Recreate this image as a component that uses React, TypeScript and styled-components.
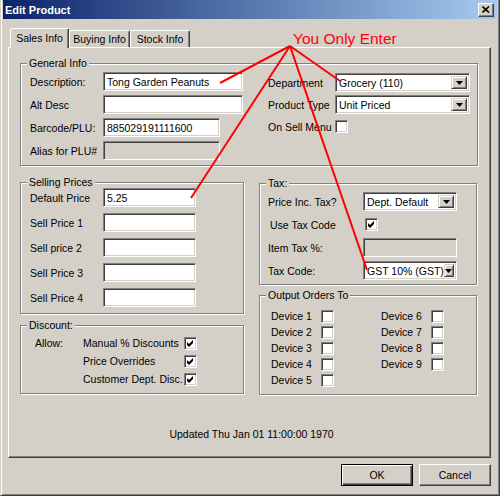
import React from 'react'
import styled, { createGlobalStyle } from 'styled-components'

const GlobalStyle = createGlobalStyle`
  html, body {
    margin: 0;
    padding: 0;
    background: #d4d0c8;
  }
  body {
    font-family: 'Liberation Sans', Arial, sans-serif;
    font-size: 10.5px;
    color: #000;
  }
  * {
    box-sizing: border-box;
  }
`

const Window = styled.div`
  position: relative;
  width: 500px;
  height: 496px;
  background: #d4d0c8;
  border-style: solid;
  border-width: 0 1px 1px 1px;
  border-color: #d4d0c8 #404040 #404040 #d4d0c8;
  box-shadow: inset 1px 0 0 #fff, inset -1px -1px 0 #808080;
  padding: 0 2px 2px 2px;
  display: flex;
  flex-direction: column;
`

const TitleBar = styled.div`
  height: 19px;
  display: flex;
  align-items: center;
  justify-content: space-between;
  padding: 0 3px 0 2px;
  background: linear-gradient(to right, #0a246a, #a6caf0);
`

const TitleText = styled.span`
  color: #fff;
  font-weight: bold;
  font-size: 11px;
`

const CloseButton = styled.div`
  width: 16px;
  height: 14px;
  background: #d4d0c8;
  border: 1px solid;
  border-color: #fff #404040 #404040 #fff;
  box-shadow: inset -1px -1px 0 #808080;
  display: flex;
  align-items: center;
  justify-content: center;
`

const Body = styled.div`
  padding: 9px 6px 0 5px;
  display: flex;
  flex-direction: column;
`

const TabStrip = styled.div`
  display: flex;
  align-items: flex-end;
  height: 19px;
  padding-left: 2px;
`

const Tab = styled.div<{ $active?: boolean; $width: number }>`
  position: relative;
  z-index: ${(p) => (p.$active ? 2 : 1)};
  width: ${(p) => p.$width}px;
  height: ${(p) => (p.$active ? 20 : 17)}px;
  margin-bottom: ${(p) => (p.$active ? -1 : 0)}px;
  background: #d4d0c8;
  border-style: solid;
  border-width: 1px 1px 0 1px;
  border-color: #fff #404040 #fff #fff;
  border-top-left-radius: 2px;
  border-top-right-radius: 2px;
  box-shadow: inset -1px 0 0 #808080;
  display: flex;
  align-items: center;
  justify-content: center;
  padding-bottom: ${(p) => (p.$active ? 2 : 0)}px;
`

const TabPanel = styled.div`
  width: 483px;
  height: 411px;
  border: 1px solid;
  border-color: #fff #404040 #404040 #fff;
  box-shadow: inset -1px -1px 0 #808080;
  padding: 15px 12px 0 11px;
  display: flex;
  flex-direction: column;
`

const GroupBox = styled.div<{ $w: number; $h: number }>`
  position: relative;
  width: ${(p) => p.$w}px;
  height: ${(p) => p.$h}px;
  border: 1px solid #808080;
  box-shadow: inset 1px 1px 0 #fff, 1px 1px 0 #fff;
`

const Legend = styled.span`
  position: absolute;
  top: -7px;
  left: 6px;
  padding: 0 2px;
  line-height: 13px;
  background: #d4d0c8;
`

const Group = ({
  legend,
  w,
  h,
  children,
}: {
  legend: string
  w: number
  h: number
  children: React.ReactNode
}) => (
  <GroupBox $w={w} $h={h}>
    <Legend>{legend}</Legend>
    {children}
  </GroupBox>
)

const GeneralBody = styled.div`
  display: flex;
  gap: 25px;
  padding: 8px 0 0 9px;
`

const FieldStack = styled.div<{ $gap: number; $pad?: string }>`
  display: flex;
  flex-direction: column;
  gap: ${(p) => p.$gap}px;
  padding: ${(p) => p.$pad || '0'};
`

const Row = styled.div`
  display: flex;
  align-items: center;
  height: 19px;
`

const Label = styled.span<{ $w: number; $indent?: number }>`
  width: ${(p) => p.$w}px;
  padding-left: ${(p) => p.$indent || 0}px;
  white-space: nowrap;
`

const TextBox = styled.div<{ $w: number; $disabled?: boolean; $h?: number }>`
  width: ${(p) => p.$w}px;
  height: ${(p) => p.$h || 19}px;
  background: ${(p) => (p.$disabled ? '#d4d0c8' : '#fff')};
  border: 1px solid;
  border-color: #808080 #fff #fff #808080;
  box-shadow: inset 1px 1px 0 #404040, inset -1px -1px 0 #d4d0c8;
  padding: 0 3px;
  display: flex;
  align-items: center;
  white-space: nowrap;
  overflow: hidden;
`

const SelectBox = styled(TextBox)`
  justify-content: space-between;
  padding: 2px 2px 2px 3px;
`

const DropButton = styled.div`
  width: 16px;
  height: 100%;
  background: #d4d0c8;
  border: 1px solid;
  border-color: #d4d0c8 #404040 #404040 #d4d0c8;
  box-shadow: inset 1px 1px 0 #fff, inset -1px -1px 0 #808080;
  display: flex;
  align-items: center;
  justify-content: center;
`

const Select = ({ w, value }: { w: number; value: string }) => (
  <SelectBox $w={w}>
    <span>{value}</span>
    <DropButton>
      <svg width="7" height="4" viewBox="0 0 7 4">
        <polygon points="0,0 7,0 3.5,4" fill="#000" />
      </svg>
    </DropButton>
  </SelectBox>
)

const CheckBoxBox = styled.div<{ $ml?: number }>`
  width: 13px;
  height: 13px;
  margin-left: ${(p) => p.$ml || 0}px;
  background: #fff;
  border: 1px solid;
  border-color: #808080 #fff #fff #808080;
  box-shadow: inset 1px 1px 0 #404040, inset -1px -1px 0 #d4d0c8;
  display: flex;
  align-items: center;
  justify-content: center;
  flex-shrink: 0;
`

const CheckBox = ({ checked, ml }: { checked?: boolean; ml?: number }) => (
  <CheckBoxBox $ml={ml}>
    {checked && (
      <svg width="7" height="7" viewBox="0 0 7 7">
        <polygon points="0,2 2,4 6,0 6,3 2,7 0,5" fill="#000" />
      </svg>
    )}
  </CheckBoxBox>
)

const Columns = styled.div`
  display: flex;
  gap: 15px;
  margin-top: 16px;
`

const Column = styled.div<{ $gap: number; $top?: number }>`
  display: flex;
  flex-direction: column;
  gap: ${(p) => p.$gap}px;
  margin-top: ${(p) => p.$top || 0}px;
`

const DiscountGrid = styled.div`
  display: grid;
  grid-template-columns: 48px 101px 13px;
  grid-auto-rows: 18px;
  align-items: center;
  padding: 8px 0 0 14px;
`

const DeviceGrid = styled.div`
  display: grid;
  grid-template-columns: 110px 110px;
  grid-template-rows: repeat(5, 16px);
  grid-auto-flow: column;
  padding: 12px 0 0 11px;
`

const Device = styled.div`
  display: flex;
  align-items: center;
`

const Updated = styled.div`
  margin-top: 33px;
  padding-left: 5px;
  text-align: center;
  line-height: 13px;
`

const ButtonRow = styled.div`
  display: flex;
  justify-content: flex-end;
  gap: 6px;
  margin-top: 6px;
  padding-right: 0;
`

const Button = styled.div<{ $default?: boolean }>`
  width: 72px;
  height: 22px;
  background: #d4d0c8;
  display: flex;
  align-items: center;
  justify-content: center;
  border: 1px solid;
  border-color: ${(p) => (p.$default ? '#000' : '#fff #404040 #404040 #fff')};
  box-shadow: ${(p) =>
    p.$default
      ? 'inset 1px 1px 0 #fff, inset -1px -1px 0 #404040, inset -2px -2px 0 #808080'
      : 'inset -1px -1px 0 #808080'};
`

const Annotation = styled.svg`
  position: absolute;
  left: -1px;
  top: 0;
  pointer-events: none;
`

const devices = [1, 2, 3, 4, 5, 6, 7, 8, 9]
const sellRows = ['Sell Price 1', 'Sell price 2', 'Sell Price 3', 'Sell Price 4']

const App = () => {
  return (
    <Window>
      <GlobalStyle />
      <TitleBar>
        <TitleText>Edit Product</TitleText>
        <CloseButton>
          <svg width="8" height="7" viewBox="0 0 8 7">
            <path d="M0.5 0.5 L7 6.5 M7 0.5 L0.5 6.5" stroke="#000" strokeWidth="1.6" />
          </svg>
        </CloseButton>
      </TitleBar>
      <Body>
        <TabStrip>
          <Tab $active $width={59}>Sales Info</Tab>
          <Tab $width={61}>Buying Info</Tab>
          <Tab $width={60}>Stock Info</Tab>
        </TabStrip>
        <TabPanel>
          <Group legend="General Info" w={458} h={103}>
            <GeneralBody>
              <FieldStack $gap={4}>
                <Row>
                  <Label $w={73}>Description:</Label>
                  <TextBox $w={140}>Tong Garden Peanuts</TextBox>
                </Row>
                <Row>
                  <Label $w={73}>Alt Desc</Label>
                  <TextBox $w={140} />
                </Row>
                <Row>
                  <Label $w={73}>Barcode/PLU:</Label>
                  <TextBox $w={117}>885029191111600</TextBox>
                </Row>
                <Row>
                  <Label $w={73}>Alias for PLU#</Label>
                  <TextBox $w={117} $disabled />
                </Row>
              </FieldStack>
              <FieldStack $gap={3} $pad="1px 0 0 0">
                <Row>
                  <Label $w={67}>Department</Label>
                  <Select w={135} value="Grocery (110)" />
                </Row>
                <Row>
                  <Label $w={67}>Product Type</Label>
                  <Select w={135} value="Unit Priced" />
                </Row>
                <Row>
                  <Label $w={67}>On Sell Menu</Label>
                  <CheckBox />
                </Row>
              </FieldStack>
            </GeneralBody>
          </Group>
          <Columns>
            <Column $gap={11}>
              <Group legend="Selling Prices" w={224} h={132}>
                <FieldStack $gap={6} $pad="5px 0 0 9px">
                  <Row>
                    <Label $w={73}>Default Price</Label>
                    <TextBox $w={93}>5.25</TextBox>
                  </Row>
                  {sellRows.map((r) => (
                    <Row key={r}>
                      <Label $w={73}>{r}</Label>
                      <TextBox $w={93} />
                    </Row>
                  ))}
                </FieldStack>
              </Group>
              <Group legend="Discount:" w={224} h={69}>
                <DiscountGrid>
                  <span>Allow:</span>
                  <span>Manual % Discounts</span>
                  <CheckBox checked />
                  <span />
                  <span>Price Overrides</span>
                  <CheckBox checked />
                  <span />
                  <span>Customer Dept. Disc.</span>
                  <CheckBox checked />
                </DiscountGrid>
              </Group>
            </Column>
            <Column $gap={10} $top={1}>
              <Group legend="Tax:" w={218} h={102}>
                <FieldStack $gap={4} $pad="8px 0 0 8px">
                  <Row>
                    <Label $w={95}>Price Inc. Tax?</Label>
                    <Select w={94} value="Dept. Default" />
                  </Row>
                  <Row>
                    <Label $w={95} $indent={2}>Use Tax Code</Label>
                    <CheckBox checked ml={2} />
                  </Row>
                  <Row>
                    <Label $w={95}>Item Tax %:</Label>
                    <TextBox $w={94} $disabled />
                  </Row>
                  <Row>
                    <Label $w={95}>Tax Code:</Label>
                    <Select w={94} value="GST 10% (GST)" />
                  </Row>
                </FieldStack>
              </Group>
              <Group legend="Output Orders To" w={218} h={100}>
                <DeviceGrid>
                  {devices.map((d) => (
                    <Device key={d}>
                      <Label $w={50}>Device {d}</Label>
                      <CheckBox />
                    </Device>
                  ))}
                </DeviceGrid>
              </Group>
            </Column>
          </Columns>
          <Updated>Updated Thu Jan 01 11:00:00 1970</Updated>
        </TabPanel>
        <ButtonRow>
          <Button $default>OK</Button>
          <Button>Cancel</Button>
        </ButtonRow>
      </Body>
      <Annotation width="500" height="496" viewBox="0 0 500 496">
        <g stroke="#ff0000" strokeWidth="2" fill="none">
          <line x1="290" y1="46" x2="220" y2="83" />
          <line x1="290" y1="46" x2="191" y2="198" />
          <line x1="290" y1="46" x2="340" y2="81" />
          <line x1="290" y1="46" x2="367" y2="270" />
        </g>
        <text
          x="293"
          y="44"
          fill="#ff0000"
          fontSize="15.5"
          fontFamily="'Liberation Sans', Arial, sans-serif"
        >
          You Only Enter
        </text>
      </Annotation>
    </Window>
  )
}

export default App
